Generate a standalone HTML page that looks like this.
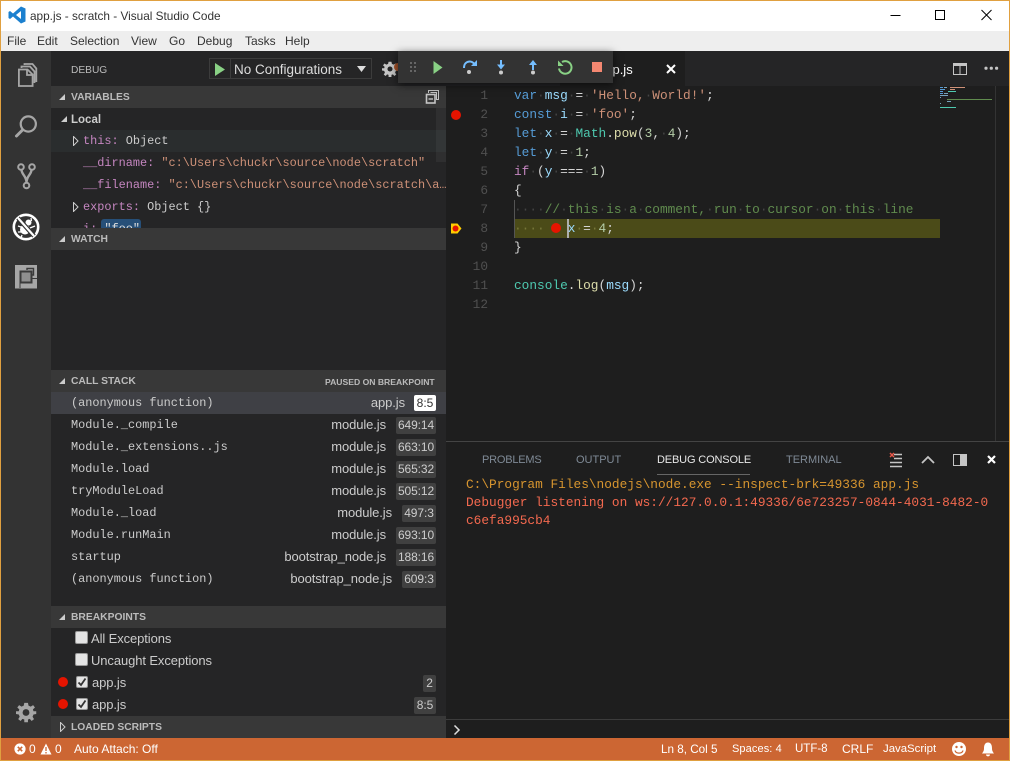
<!DOCTYPE html>
<html><head><meta charset="utf-8"><title>app.js - scratch - Visual Studio Code</title>
<style>
html,body{margin:0;padding:0;background:#1e1e1e}
#r{position:relative;width:1010px;height:761px;overflow:hidden;background:#1e1e1e;font-family:"Liberation Sans",sans-serif;font-size:12px;color:#ccc}
.a{position:absolute;white-space:nowrap}
.b{position:absolute}
.m{font-family:"Liberation Mono",monospace}
.h{position:absolute;left:51px;width:395px;height:22px;background:#383838}
.h span{position:absolute;left:20px;top:1px;line-height:22px;font-size:10.3px;font-weight:bold;color:#bbb}
.tri{position:absolute;left:8px;top:8px;width:0;height:0;border-left:6px solid transparent;border-bottom:6px solid #ccc}
.var{position:absolute;font-family:"Liberation Mono",monospace;font-size:11.88px;line-height:22px;height:22px;white-space:nowrap;color:#ccc}
.n{color:#c586c0}.s{color:#ce9178}
.cs{position:absolute;left:71px;font-family:"Liberation Mono",monospace;font-size:11.88px;line-height:22px;white-space:nowrap;color:#ccc}
.f{position:absolute;line-height:22px;font-size:13px;color:#ccc;white-space:nowrap;letter-spacing:-.1px}
.p{position:absolute;top:0;height:17px;line-height:17px;background:#404040;border-radius:2px;font-size:12px;color:#ccc;text-align:center;letter-spacing:-.1px}
.ln{position:absolute;left:446px;width:42px;text-align:right;font-family:"Liberation Mono",monospace;font-size:12.8px;line-height:19px;color:#505050}
.c{position:absolute;left:514px;font-family:"Liberation Mono",monospace;font-size:12.8px;line-height:19px;white-space:pre;color:#d4d4d4}
.k{color:#569cd6}.v{color:#9cdcfe}.t{color:#ce9178}.u{color:#b5cea8}.y{color:#4ec9b0}.g{color:#dcdcaa}.q{color:#608b4e}.i{color:#c586c0}.d{color:#454545}
.dot{position:absolute;width:10px;height:10px;border-radius:50%;background:#e51400}
.tab{position:absolute;top:453px;line-height:15px;font-size:11px;color:#7f8a96;white-space:nowrap}
.st{position:absolute;top:738px;line-height:23px;font-size:12px;color:#fff;white-space:nowrap}
.chk{position:absolute;width:11px;height:11px;background:#e4e4e4;border:1px solid #999;border-radius:2px}
</style></head><body><div id="r">

<!-- chrome -->
<div class="b" style="left:0;top:0;width:1010px;height:31px;background:#fff"></div>
<div class="b" style="left:0;top:31px;width:1010px;height:20px;background:#eee"></div>
<svg class="b" style="left:8px;top:6px" width="18" height="18" viewBox="0 0 18 18"><path d="M13 0.5 L17.5 2.5 V15.5 L13 17.5 L5 10.5 L2 13 L0.5 12 V6 L2 5 L5 7.5 Z M13 5 L8 9 L13 13 Z" fill="#1b80cf" fill-rule="evenodd"/></svg>
<div class="a" style="left:30px;top:8px;line-height:16px;font-size:11.8px;color:#333">app.js - scratch - Visual Studio Code</div>
<div class="a" style="left:7px;top:33px;line-height:16px;font-size:12px;color:#333">File</div>
<div class="a" style="left:37px;top:33px;line-height:16px;font-size:12px;color:#333">Edit</div>
<div class="a" style="left:70px;top:33px;line-height:16px;font-size:12px;color:#333">Selection</div>
<div class="a" style="left:131px;top:33px;line-height:16px;font-size:12px;color:#333">View</div>
<div class="a" style="left:169px;top:33px;line-height:16px;font-size:12px;color:#333">Go</div>
<div class="a" style="left:197px;top:33px;line-height:16px;font-size:12px;color:#333">Debug</div>
<div class="a" style="left:245px;top:33px;line-height:16px;font-size:12px;color:#333">Tasks</div>
<div class="a" style="left:285px;top:33px;line-height:16px;font-size:12px;color:#333">Help</div>
<svg class="b" style="left:880px;top:8px" width="120" height="16" viewBox="0 0 120 16"><path d="M10.5 7.5H20.5" stroke="#000" fill="none"/><rect x="55.5" y="2.5" width="9" height="9" stroke="#000" stroke-width="1" fill="none"/><path d="M101.5 2L111.5 12M111.5 2L101.5 12" stroke="#000" fill="none"/></svg>

<!-- activity bar -->
<div class="b" style="left:0;top:51px;width:51px;height:687px;background:#333"></div>
<svg class="b" style="left:13px;top:60px" width="28" height="30" viewBox="0 0 28 30" fill="none" stroke="#a6a6a6" stroke-width="1.8"><path d="M5.9 9.5V26H19.6V14.5L14.5 9.5Z"/><path d="M8.5 8V6.5H17L21.5 11.5V23"/><path d="M11.5 5V4H19.5L23.3 8.5V22"/><path d="M14 9.5V15H19.6"/></svg>
<svg class="b" style="left:13px;top:112px" width="28" height="28" viewBox="0 0 28 28" fill="none" stroke="#a6a6a6"><circle cx="15.3" cy="12" r="7.6" stroke-width="2.2"/><path d="M9.5 18L3.5 24" stroke-width="3" stroke-linecap="round"/></svg>
<svg class="b" style="left:15px;top:161px" width="24" height="30" viewBox="0 0 24 30" fill="none" stroke="#a6a6a6" stroke-width="2"><circle cx="6" cy="6" r="2.8"/><circle cx="17" cy="6" r="2.8"/><circle cx="11.5" cy="24.5" r="2.8"/><path d="M6.5 9C7 14 11.5 15 11.5 21.5M16.5 9C16 14 11.5 15 11.5 21.5" stroke-width="2.4"/></svg>
<svg class="b" style="left:12px;top:213px" width="28" height="28" viewBox="0 0 28 28"><circle cx="14" cy="14" r="12.2" fill="#333" stroke="#fff" stroke-width="2.6"/><ellipse cx="13" cy="16.5" rx="5" ry="5" fill="#fff"/><circle cx="16.5" cy="9.5" r="3" fill="#fff"/><path d="M18 15L23 13M6 13L9 14M6 19H9M19 5L19.5 8M10 22L9 25M19 20L21 22" stroke="#fff" stroke-width="1.3"/><path d="M6 5L22 23" stroke="#333" stroke-width="4.5"/><path d="M6 5L22 23" stroke="#fff" stroke-width="2.2"/></svg>
<svg class="b" style="left:15px;top:265px" width="22" height="24" viewBox="0 0 22 24"><rect x="0" y="0" width="22" height="23.5" fill="#a6a6a6"/><rect x="5.5" y="6.5" width="11" height="11" fill="#8f8f8f" stroke="#3a3a3a" stroke-width="2"/><path d="M12 5V3.5H18.5V10H17" fill="none" stroke="#3a3a3a" stroke-width="1.4"/><path d="M17.5 13.5H22M5 23V18" stroke="#3a3a3a" stroke-width="1"/></svg>
<svg class="b" style="left:15px;top:702px" width="22" height="22" viewBox="0 0 22 22"><path d="M9 1H13L13.6 4 16 5 18.6 3.4 20.6 6 18.4 8 19 10H22V13L19 13.6 18 16 19.6 18.6 17 20.6 15 18.4 13 19V22H9V19L7 18.4 5 20.6 2.4 18.6 4 16 3 13.6 0 13V10H3L3.6 8 1.4 6 3.4 3.4 6 5 8.4 4Z" fill="#a6a6a6" transform="translate(1 0) scale(.92)"/><circle cx="11" cy="10.5" r="3.4" fill="#333"/></svg>

<!-- sidebar -->
<div class="b" style="left:51px;top:51px;width:395px;height:687px;background:#252526"></div>
<div class="a" style="left:71px;top:63px;line-height:16px;font-size:10.2px;color:#bbb">DEBUG</div>
<div class="b" style="left:209px;top:58px;width:163px;height:21px;border:1px solid #3c3c3c;box-sizing:border-box"></div>
<div class="b" style="left:230px;top:58px;width:1px;height:21px;background:#3c3c3c"></div>
<svg class="b" style="left:215px;top:63px" width="12" height="14"><path d="M0 0L10 6.5L0 13Z" fill="#89d185"/></svg>
<div class="a" style="left:234px;top:61px;line-height:17px;font-size:13.5px;color:#ddd">No Configurations</div>
<svg class="b" style="left:357px;top:66px" width="10" height="7"><path d="M0 0H9L4.5 6Z" fill="#ddd"/></svg>
<svg class="b" style="left:382px;top:61px" width="16" height="16" viewBox="0 0 22 22"><path d="M9 1H13L13.6 4 16 5 18.6 3.4 20.6 6 18.4 8 19 10H22V13L19 13.6 18 16 19.6 18.6 17 20.6 15 18.4 13 19V22H9V19L7 18.4 5 20.6 2.4 18.6 4 16 3 13.6 0 13V10H3L3.6 8 1.4 6 3.4 3.4 6 5 8.4 4Z" fill="#c5c5c5"/><circle cx="11" cy="11" r="3.5" fill="#252526"/></svg>
<div class="b" style="left:394px;top:63px;width:8px;height:8px;border-radius:50%;background:#a5522a"></div>

<div class="h" style="top:86px"><i class="tri"></i><span>VARIABLES</span></div>
<svg class="b" style="left:425px;top:90px" width="14" height="14" viewBox="0 0 14 14" fill="none" stroke="#c5c5c5"><path d="M3.5 3V.5H13.5V9.5H11M5.5 2.5H11.5V9"/><rect x="1.5" y="4.5" width="8.5" height="8.5" stroke-width="1.6"/><path d="M3.5 9H8" stroke-width="1.4"/></svg>
<div class="b" style="left:51px;top:130px;width:395px;height:22px;background:#2a2d2e"></div>
<i class="b" style="left:61px;top:116px;width:0;height:0;border-left:6px solid transparent;border-bottom:6px solid #ccc"></i>
<div class="a" style="left:71px;top:109px;line-height:22px;font-size:11.5px;font-weight:bold;color:#ccc">Local</div>
<svg class="b" style="left:73px;top:136px" width="6" height="10"><path d="M.5 .5L5 5 .5 9.5Z" fill="#252526" stroke="#ccc"/></svg>
<div class="var" style="left:83px;top:130px"><span class="n">this:</span> Object</div>
<div class="var" style="left:83px;top:152px"><span class="n">__dirname:</span> <span class="s">"c:\Users\chuckr\source\node\scratch"</span></div>
<div class="var" style="left:83px;top:174px;width:363px;overflow:hidden"><span class="n">__filename:</span> <span class="s">"c:\Users\chuckr\source\node\scratch\a…</span></div>
<svg class="b" style="left:73px;top:202px" width="6" height="10"><path d="M.5 .5L5 5 .5 9.5Z" fill="#252526" stroke="#ccc"/></svg>
<div class="var" style="left:83px;top:196px"><span class="n">exports:</span> Object {}</div>
<div class="b" style="left:51px;top:218px;width:395px;height:10px;overflow:hidden">
 <div class="b" style="left:50px;top:1px;width:40px;height:18px;background:#264f78;border-radius:3px"></div>
 <div class="var" style="left:32px;top:0"><span class="n">i:</span> <span style="color:#ddd">"foo"</span></div>
</div>
<div class="b" style="left:436px;top:108px;width:10px;height:54px;background:rgba(121,121,121,.12)"></div>

<div class="h" style="top:228px"><i class="tri"></i><span>WATCH</span></div>

<div class="h" style="top:370px"><i class="tri"></i><span>CALL STACK</span><span style="left:274px;font-size:8.6px">PAUSED ON BREAKPOINT</span></div>
<div class="b" style="left:51px;top:392px;width:395px;height:22px;background:#3f4045"></div>
<div class="cs" style="top:392px">(anonymous function)</div>
<div class="f" style="right:605px;top:392px">app.js</div>
<div class="b" style="left:414px;top:395px;width:22px;height:16px;line-height:16px;background:#fff;color:#333;border-radius:2px;text-align:center;font-size:12px">8:5</div>

<div class="cs" style="top:414px">Module._compile</div><div class="f" style="right:624px;top:414px">module.js</div><div class="p" style="left:396px;top:417px;width:40px">649:14</div>
<div class="cs" style="top:436px">Module._extensions..js</div><div class="f" style="right:624px;top:436px">module.js</div><div class="p" style="left:396px;top:439px;width:40px">663:10</div>
<div class="cs" style="top:458px">Module.load</div><div class="f" style="right:624px;top:458px">module.js</div><div class="p" style="left:396px;top:461px;width:40px">565:32</div>
<div class="cs" style="top:480px">tryModuleLoad</div><div class="f" style="right:624px;top:480px">module.js</div><div class="p" style="left:396px;top:483px;width:40px">505:12</div>
<div class="cs" style="top:502px">Module._load</div><div class="f" style="right:618px;top:502px">module.js</div><div class="p" style="left:402px;top:505px;width:34px">497:3</div>
<div class="cs" style="top:524px">Module.runMain</div><div class="f" style="right:624px;top:524px">module.js</div><div class="p" style="left:396px;top:527px;width:40px">693:10</div>
<div class="cs" style="top:546px">startup</div><div class="f" style="right:624px;top:546px">bootstrap_node.js</div><div class="p" style="left:396px;top:549px;width:40px">188:16</div>
<div class="cs" style="top:568px">(anonymous function)</div><div class="f" style="right:618px;top:568px">bootstrap_node.js</div><div class="p" style="left:402px;top:571px;width:34px">609:3</div>

<div class="h" style="top:606px"><i class="tri"></i><span>BREAKPOINTS</span></div>
<div class="chk" style="left:75px;top:631px"></div><div class="f" style="left:91px;top:628px">All Exceptions</div>
<div class="chk" style="left:75px;top:653px"></div><div class="f" style="left:91px;top:650px">Uncaught Exceptions</div>
<div class="dot" style="left:58px;top:677px"></div>
<svg class="b" style="left:76px;top:676px" width="12" height="12"><rect x=".5" y=".5" width="11" height="11" rx="1.5" fill="#e4e4e4" stroke="#999"/><path d="M2.5 6.5L5 9 9.5 2.5" stroke="#333" stroke-width="1.8" fill="none"/></svg>
<div class="f" style="left:92px;top:672px">app.js</div><div class="p" style="left:423px;top:675px;width:13px">2</div>
<div class="dot" style="left:58px;top:699px"></div>
<svg class="b" style="left:76px;top:698px" width="12" height="12"><rect x=".5" y=".5" width="11" height="11" rx="1.5" fill="#e4e4e4" stroke="#999"/><path d="M2.5 6.5L5 9 9.5 2.5" stroke="#333" stroke-width="1.8" fill="none"/></svg>
<div class="f" style="left:92px;top:694px">app.js</div><div class="p" style="left:414px;top:697px;width:22px">8:5</div>
<div class="h" style="top:716px"><svg class="b" style="left:9px;top:6px" width="6" height="10"><path d="M.5 .5L5 5 .5 9.5Z" fill="#383838" stroke="#ccc"/></svg><span>LOADED SCRIPTS</span></div>

<!-- tabs -->
<div class="b" style="left:446px;top:51px;width:564px;height:35px;background:#252526"></div>
<div class="b" style="left:560px;top:51px;width:125px;height:35px;background:#1e1e1e"></div>
<div class="a" style="left:598px;top:61px;line-height:17px;font-size:13px;color:#fff">app.js</div>
<svg class="b" style="left:666px;top:64px" width="10" height="10"><path d="M1 1L9 9M9 1L1 9" stroke="#fff" stroke-width="2"/></svg>
<svg class="b" style="left:953px;top:63px" width="14" height="12"><rect x="0" y="0" width="14" height="12" fill="#c5c5c5"/><rect x="1" y="3" width="5.5" height="8" fill="#252526"/><rect x="7.5" y="3" width="5.5" height="8" fill="#252526"/></svg>
<svg class="b" style="left:984px;top:66px" width="15" height="5"><circle cx="2" cy="2.2" r="1.6" fill="#c5c5c5"/><circle cx="7.3" cy="2.2" r="1.6" fill="#c5c5c5"/><circle cx="12.6" cy="2.2" r="1.6" fill="#c5c5c5"/></svg>

<!-- debug toolbar -->
<div class="b" style="left:398px;top:51px;width:215px;height:32px;background:#333;box-shadow:0 2px 8px rgba(0,0,0,.6)"></div>
<svg class="b" style="left:398px;top:51px" width="215" height="32" viewBox="0 0 215 32">
<g fill="#666"><rect x="12" y="11" width="2" height="2"/><rect x="16" y="11" width="2" height="2"/><rect x="12" y="15" width="2" height="2"/><rect x="16" y="15" width="2" height="2"/><rect x="12" y="19" width="2" height="2"/><rect x="16" y="19" width="2" height="2"/></g>
<path d="M35.5 10V23L44.5 16.5Z" fill="#89d185"/>
<path d="M66 17C66 9 75 9 77 14" stroke="#75beff" stroke-width="2" fill="none"/><path d="M73 15H79V9Z" fill="#75beff"/><circle cx="71" cy="21" r="2" fill="#ccc"/>
<path d="M103 9V17" stroke="#75beff" stroke-width="2"/><path d="M99 13.5H107L103 18.5Z" fill="#75beff"/><circle cx="103" cy="21.5" r="2" fill="#ccc"/>
<path d="M135 12V19" stroke="#75beff" stroke-width="2"/><path d="M131 14H139L135 9Z" fill="#75beff"/><circle cx="135" cy="21.5" r="2" fill="#ccc"/>
<path d="M164 11A6.3 6.3 0 1 1 161 17.5" stroke="#89d185" stroke-width="2" fill="none"/><path d="M160 9.5V15H165.5Z" fill="#89d185"/>
<rect x="194" y="11" width="10" height="10" fill="#f48771"/>
</svg>

<!-- gutter -->
<div class="dot" style="left:451px;top:110px"></div>
<svg class="b" style="left:451px;top:223px" width="11" height="11"><path d="M0 .5H6.5L10.5 5.5 6.5 10.5H0Z" fill="#fc0"/><circle cx="4.5" cy="5.5" r="3" fill="#e51400"/></svg>

<!-- line numbers -->
<div class="ln" style="top:86px">1</div><div class="ln" style="top:105px">2</div><div class="ln" style="top:124px">3</div><div class="ln" style="top:143px">4</div><div class="ln" style="top:162px">5</div><div class="ln" style="top:181px">6</div><div class="ln" style="top:200px">7</div><div class="ln" style="top:219px">8</div><div class="ln" style="top:238px">9</div><div class="ln" style="top:257px">10</div><div class="ln" style="top:276px">11</div><div class="ln" style="top:295px">12</div>

<!-- code -->
<div class="b" style="left:514px;top:219px;width:426px;height:19px;background:#4b4b18"></div>
<div class="b" style="left:514px;top:200px;width:1px;height:38px;background:#555"></div>
<div class="b" style="left:567px;top:219px;width:2px;height:19px;background:#aeafad"></div>
<div class="dot" style="left:551px;top:223px"></div>
<div class="c" style="top:86px"><span class="k">var</span><span class="d">·</span><span class="v">msg</span><span class="d">·</span>=<span class="d">·</span><span class="t">'Hello,</span><span class="d">·</span><span class="t">World!'</span>;</div>
<div class="c" style="top:105px"><span class="k">const</span><span class="d">·</span><span class="v">i</span><span class="d">·</span>=<span class="d">·</span><span class="t">'foo'</span>;</div>
<div class="c" style="top:124px"><span class="k">let</span><span class="d">·</span><span class="v">x</span><span class="d">·</span>=<span class="d">·</span><span class="y">Math</span>.<span class="g">pow</span>(<span class="u">3</span>,<span class="d">·</span><span class="u">4</span>);</div>
<div class="c" style="top:143px"><span class="k">let</span><span class="d">·</span><span class="v">y</span><span class="d">·</span>=<span class="d">·</span><span class="u">1</span>;</div>
<div class="c" style="top:162px"><span class="i">if</span><span class="d">·</span>(<span class="v">y</span><span class="d">·</span>===<span class="d">·</span><span class="u">1</span>)</div>
<div class="c" style="top:181px">{</div>
<div class="c" style="top:200px"><span class="d">····</span><span class="q">//</span><span class="d">·</span><span class="q">this</span><span class="d">·</span><span class="q">is</span><span class="d">·</span><span class="q">a</span><span class="d">·</span><span class="q">comment,</span><span class="d">·</span><span class="q">run</span><span class="d">·</span><span class="q">to</span><span class="d">·</span><span class="q">cursor</span><span class="d">·</span><span class="q">on</span><span class="d">·</span><span class="q">this</span><span class="d">·</span><span class="q">line</span></div>
<div class="c" style="top:219px"><span style="color:#77773a">····</span>   <span class="v">x</span><span style="color:#77773a">·</span>=<span style="color:#77773a">·</span><span class="u">4</span>;</div>
<div class="c" style="top:238px">}</div>
<div class="c" style="top:276px"><span class="y">console</span>.<span class="g">log</span>(<span class="v">msg</span>);</div>

<!-- minimap -->
<svg class="b" style="left:940px;top:86px" width="56" height="24">
<g fill="#569cd6"><rect y="1" width="3" height="1"/><rect y="3" width="5" height="1"/><rect y="5" width="3" height="1"/><rect y="7" width="3" height="1"/></g>
<g fill="#ce9178"><rect x="10" y="1" width="15" height="1"/><rect x="10" y="3" width="5" height="1"/></g>
<g fill="#4ec9b0"><rect x="8" y="5" width="8" height="1"/><rect y="21" width="16" height="1"/></g>
<g fill="#608b4e"><rect x="7" y="13" width="45" height="1"/></g>
<g fill="#9cdcfe" opacity=".7"><rect x="4" y="1" width="3" height="1"/><rect x="4" y="7" width="4" height="1"/><rect y="9" width="8" height="1"/><rect y="11" width="1" height="1"/><rect y="17" width="1" height="1"/><rect x="7" y="15" width="4" height="1"/></g>
</svg>
<div class="b" style="left:995px;top:86px;width:1px;height:355px;background:#333"></div>

<!-- panel -->
<div class="b" style="left:446px;top:441px;width:564px;height:1px;background:#444"></div>
<div class="tab" style="left:482px;letter-spacing:-.2px">PROBLEMS</div>
<div class="tab" style="left:576px">OUTPUT</div>
<div class="tab" style="left:657px;color:#e7e7e7;letter-spacing:-.15px">DEBUG CONSOLE</div>
<div class="tab" style="left:786px">TERMINAL</div>
<div class="b" style="left:657px;top:474px;width:93px;height:1px;background:#666"></div>
<svg class="b" style="left:889px;top:452px" width="110" height="16" viewBox="0 0 110 16">
<path d="M5 2.5H13M5 6.5H13M1 10.5H13M1 14.5H13" stroke="#c5c5c5" stroke-width="1.6"/><path d="M1 1L5 5M5 1L1 5" stroke="#e8584a" stroke-width="1.5"/>
<path d="M33 11L39 5 45 11" stroke="#c5c5c5" stroke-width="1.8" fill="none"/>
<rect x="64.5" y="2.5" width="13" height="11" fill="none" stroke="#c5c5c5"/><rect x="71" y="2.5" width="7" height="11" fill="#c5c5c5"/>
<path d="M99 4L106 11M106 4L99 11" stroke="#fff" stroke-width="2.2"/>
</svg>
<div class="a m" style="left:466px;top:476px;font-size:12.8px;line-height:18px;color:#d7952f">C:\Program Files\nodejs\node.exe --inspect-brk=49336 app.js</div>
<div class="a m" style="left:466px;top:494px;font-size:12.8px;line-height:18px;color:#f4694f">Debugger listening on ws://127.0.0.1:49336/6e723257-0844-4031-8482-0</div>
<div class="a m" style="left:466px;top:512px;font-size:12.8px;line-height:18px;color:#f4694f">c6efa995cb4</div>
<div class="b" style="left:446px;top:719px;width:564px;height:1px;background:#3c3c3c"></div>
<svg class="b" style="left:453px;top:725px" width="8" height="10"><path d="M1.5 .5L6 5 1.5 9.5" stroke="#ddd" stroke-width="1.5" fill="none"/></svg>

<!-- status -->
<div class="b" style="left:0;top:738px;width:1010px;height:23px;background:#cc6633"></div>
<svg class="b" style="left:14px;top:743px" width="12" height="12"><circle cx="6" cy="6" r="5.6" fill="#fff"/><path d="M3.8 3.8L8.2 8.2M8.2 3.8L3.8 8.2" stroke="#cc6633" stroke-width="1.6"/></svg>
<div class="st" style="left:29px">0</div>
<svg class="b" style="left:40px;top:743px" width="12" height="12"><path d="M6 .5L11.5 11.5H.5Z" fill="#fff"/><path d="M6 4V8M6 9V10.5" stroke="#cc6633" stroke-width="1.3"/></svg>
<div class="st" style="left:55px">0</div>
<div class="st" style="left:74px">Auto Attach: Off</div>
<div class="st" style="left:661px;font-size:11.7px">Ln 8, Col 5</div>
<div class="st" style="left:732px;font-size:11px;letter-spacing:.1px">Spaces: 4</div>
<div class="st" style="left:795px;font-size:11.5px">UTF-8</div>
<div class="st" style="left:842px">CRLF</div>
<div class="st" style="left:883px;font-size:11.4px">JavaScript</div>
<svg class="b" style="left:951px;top:741px" width="16" height="16"><circle cx="8" cy="8" r="7" fill="#fff"/><circle cx="5.5" cy="6" r="1.2" fill="#cc6633"/><circle cx="10.5" cy="6" r="1.2" fill="#cc6633"/><path d="M4 9.5C5 13 11 13 12 9.5" stroke="#cc6633" stroke-width="1.3" fill="none"/></svg>
<svg class="b" style="left:981px;top:742px" width="14" height="15"><path d="M7 .5C10.5 .5 11 4 11 6.5C11 9 12 10 13 11.5H1C2 10 3 9 3 6.5C3 4 3.5 .5 7 .5Z" fill="#fff"/><path d="M5 12.5H9C9 15 5 15 5 12.5Z" fill="#fff"/></svg>

<!-- window border -->
<div class="b" style="left:0;top:0;width:1010px;height:1px;background:#e0a040"></div>
<div class="b" style="left:0;top:0;width:1px;height:761px;background:#e0a040"></div>
<div class="b" style="left:1009px;top:0;width:1px;height:761px;background:#e0a040"></div>
<div class="b" style="left:0;top:760px;width:1010px;height:1px;background:#e0a040"></div>
</div></body></html>
